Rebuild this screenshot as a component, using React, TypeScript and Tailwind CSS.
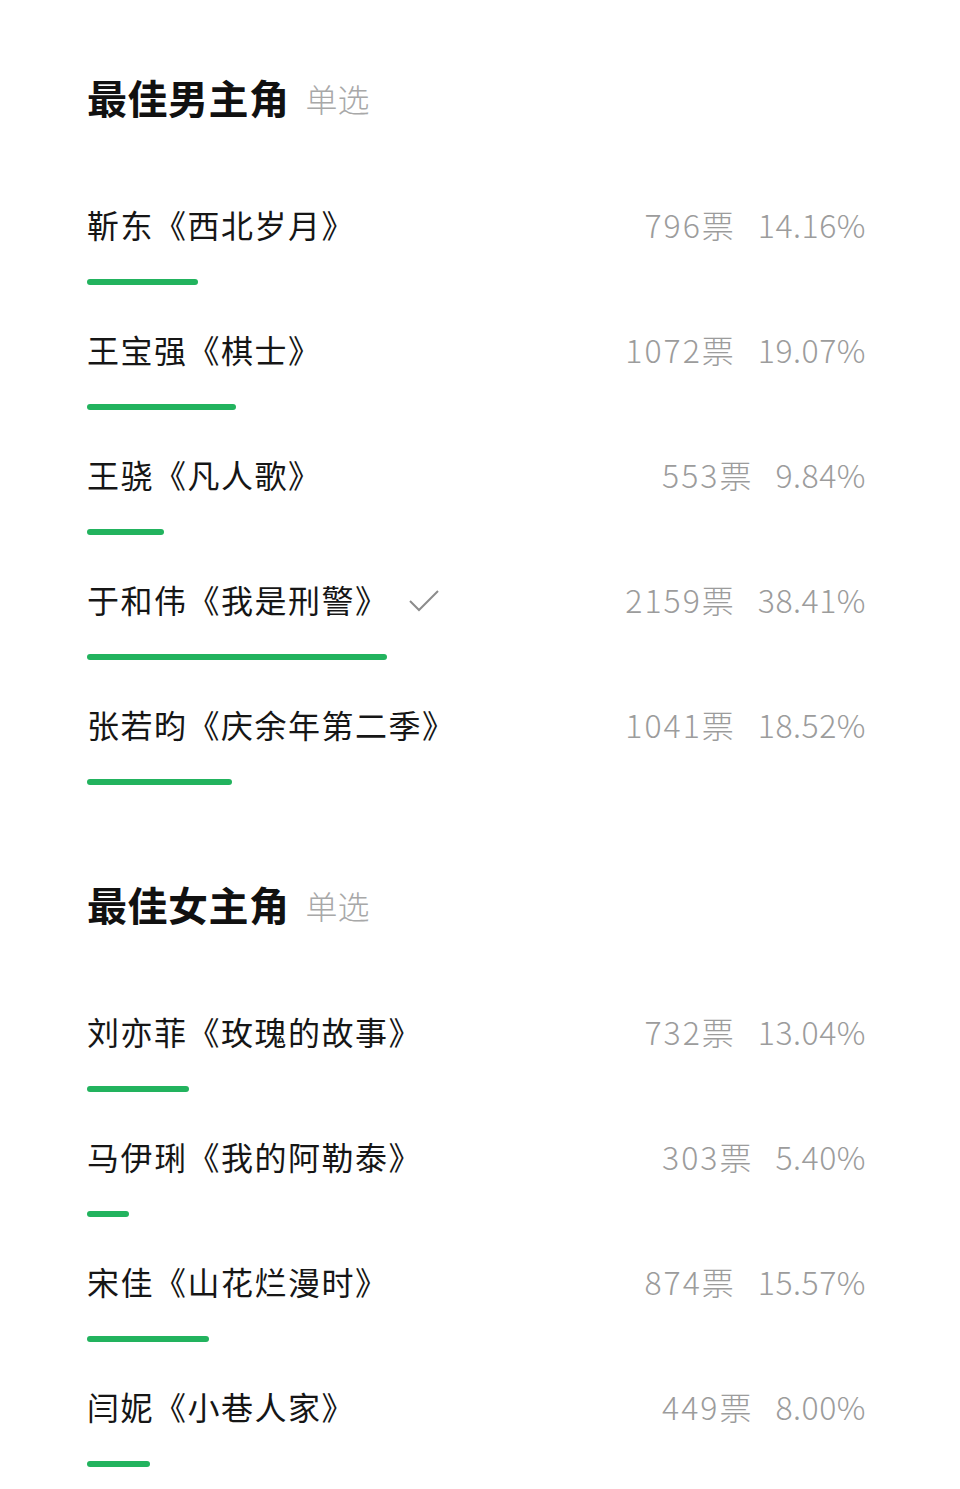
import React from "react";

type Item = { name: string; votes: number; pct: string; voted?: boolean };

const actors: Item[] = [
  { name: "靳东《西北岁月》", votes: 796, pct: "14.16" },
  { name: "王宝强《棋士》", votes: 1072, pct: "19.07" },
  { name: "王骁《凡人歌》", votes: 553, pct: "9.84" },
  { name: "于和伟《我是刑警》", votes: 2159, pct: "38.41", voted: true },
  { name: "张若昀《庆余年第二季》", votes: 1041, pct: "18.52" },
];

const actresses: Item[] = [
  { name: "刘亦菲《玫瑰的故事》", votes: 732, pct: "13.04" },
  { name: "马伊琍《我的阿勒泰》", votes: 303, pct: "5.40" },
  { name: "宋佳《山花烂漫时》", votes: 874, pct: "15.57" },
  { name: "闫妮《小巷人家》", votes: 449, pct: "8.00" },
];

function Row({ item }: { item: Item }) {
  return (
    <div className="h-[125px]">
      <div className="flex h-[50px] items-center justify-between">
        <div className="flex items-center">
          <span className="text-[32px] tracking-[1.5px] text-[#161616]">{item.name}</span>
          {item.voted && (
            <svg width="32" height="24" viewBox="0 0 32 24" className="ml-[20px] mt-[2px]">
              <path d="M1 13 L10 22 L29 3" fill="none" stroke="#8c8c8c" strokeWidth="2" />
            </svg>
          )}
        </div>
        <div className="flex items-center gap-[22px] text-[32px] font-light text-[#9c9c9c]">
          <span className="tracking-[2px]">{item.votes}票</span>
          <span className="tracking-[0.5px]">{item.pct}%</span>
        </div>
      </div>
      <div className="mt-[30px] w-[782px]">
        <div
          className="h-[6px] rounded-full bg-[#22b35e]"
          style={{ width: `${parseFloat(item.pct)}%` }}
        />
      </div>
    </div>
  );
}

function Section({ title, items }: { title: string; items: Item[] }) {
  return (
    <div>
      <div className="flex h-[80px] items-center gap-[16px]">
        <span className="text-[40px] font-bold tracking-[0.5px] text-[#111]">{title}</span>
        <span className="mt-[2px] text-[32px] font-light text-[#a8a8a8]">单选</span>
      </div>
      <div className="mt-[62px]">
        {items.map((it) => (
          <Row key={it.name} item={it} />
        ))}
      </div>
    </div>
  );
}

export default function App() {
  return (
    <div
      className="min-h-[1489px] w-[960px] bg-white pl-[87px] pr-[94px] pt-[57px]"
      style={{ fontFamily: '"Noto Sans CJK SC", "Noto Sans", sans-serif' }}
    >
      <Section title="最佳男主角" items={actors} />
      <div className="mt-[40px]">
        <Section title="最佳女主角" items={actresses} />
      </div>
    </div>
  );
}
